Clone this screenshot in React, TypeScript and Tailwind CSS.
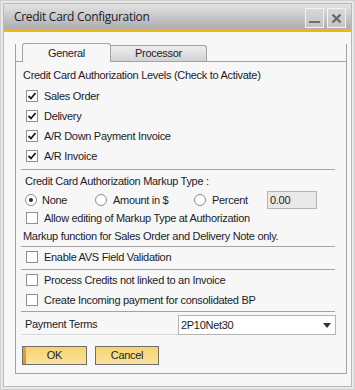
import React from "react";

const font = { fontFamily: '"Liberation Sans", Arial, sans-serif' };

function Check({ checked }: { checked?: boolean }) {
  return (
    <span className="w-[12px] h-[12px] border border-[#8e8f8f] bg-white flex items-center justify-center shrink-0">
      {checked && (
        <svg width="10" height="10" viewBox="0 0 10 10">
          <path d="M1.5 5 L4 7.5 L8.5 2" stroke="#1b1b1b" strokeWidth="1.8" fill="none" />
        </svg>
      )}
    </span>
  );
}

function Radio({ on }: { on?: boolean }) {
  return (
    <span className="w-[12px] h-[12px] rounded-full border border-[#8e8f8f] bg-white flex items-center justify-center shrink-0">
      {on && <span className="w-[4px] h-[4px] rounded-full bg-[#2a2a2a]" />}
    </span>
  );
}

function CheckRow({ label, checked, h = "h-[20px]" }: { label: string; checked?: boolean; h?: string }) {
  return (
    <div className={`${h} flex items-center pl-[10px] gap-[6px]`}>
      <Check checked={checked} />
      <span>{label}</span>
    </div>
  );
}

function Sep() {
  return <div className="ml-[5px] w-[314px] h-px bg-[#a3a3a3]" />;
}

export default function App() {
  return (
    <div className="w-[355px] h-[390px] bg-[#e9e9e9] border border-[#cfcfcf] p-[2px]" style={font}>
      <div className="h-full border border-[#b8b8b8] flex flex-col bg-[#f7f7f7]">
        <div className="h-[25px] bg-gradient-to-b from-[#e4e4e4] to-[#adadad] flex items-center pl-[10px] pr-[5px]">
          <span
            className="text-[12px] tracking-[-0.3px] text-[#1c1c2c] flex-1"
            style={{ fontFamily: '"Open Sans", "Noto Sans", sans-serif' }}
          >
            Credit Card Configuration
          </span>
          <div className="flex gap-[3px] mt-[3px]">
            <div className="w-[19px] h-[20px] border border-[#f2f2f2] bg-gradient-to-b from-[#d8d8d8] to-[#c4c4c4] flex items-end justify-center pb-[4px]">
              <span className="w-[11px] h-[2px] bg-[#6f6f6f]" />
            </div>
            <div className="w-[19px] h-[20px] border border-[#f2f2f2] bg-gradient-to-b from-[#d8d8d8] to-[#c4c4c4] flex items-center justify-center">
              <svg width="11" height="11" viewBox="0 0 11 11">
                <path d="M1.5 1.5 L9.5 9.5 M9.5 1.5 L1.5 9.5" stroke="#6a6a6a" strokeWidth="2.4" />
              </svg>
            </div>
          </div>
        </div>
        <div className="h-[3px] bg-[#f2b50e]" />
        <div className="flex-1 pt-[12px] pl-[11px] pr-[4px] text-[11px] tracking-[-0.3px] text-[#1c1c28]">
          <div className="flex items-end h-[18px] border-b border-[#a3a3a3] relative">
            <div className="w-[7px] h-full border-l border-[#a3a3a3]" />
            <div className="w-[89px] h-[19px] -mb-px bg-[#f7f7f7] border border-b-0 border-[#a3a3a3] rounded-t-[3px] flex items-center justify-center">
              General
            </div>
            <div className="w-[96px] h-[16px] bg-gradient-to-b from-[#eeeeee] to-[#d3d3d3] border border-l-0 border-b-0 border-[#a3a3a3] rounded-tr-[3px] flex items-center justify-center">
              Processor
            </div>
            <div className="flex-1 h-full border-r border-[#a3a3a3]" />
          </div>
          <div className="h-[312px] border-l border-r border-b border-[#a3a3a3] pt-[3px]">
            <div className="h-[20px] flex items-center pl-[7px]">Credit Card Authorization Levels (Check to Activate)</div>
            <div className="mt-px">
              <CheckRow label="Sales Order" checked />
              <CheckRow label="Delivery" checked />
              <CheckRow label="A/R Down Payment Invoice" checked />
              <CheckRow label="A/R Invoice" checked />
            </div>
            <div className="mt-[3px]">
              <Sep />
            </div>
            <div className="h-[20px] mt-px flex items-center pl-[9px]">Credit Card Authorization Markup Type :</div>
            <div className="h-[18px] flex items-center pl-[9px]">
              <div className="w-[70px] flex items-center gap-[5px]">
                <Radio on />
                <span>None</span>
              </div>
              <div className="w-[99px] flex items-center gap-[6px]">
                <Radio />
                <span>Amount in $</span>
              </div>
              <div className="w-[73px] flex items-center gap-[6px]">
                <Radio />
                <span>Percent</span>
              </div>
              <div className="w-[50px] h-[18px] bg-[#e9e9e9] border border-[#b4b4b4] flex items-center pl-[2px]">0.00</div>
            </div>
            <CheckRow label="Allow editing of Markup Type at Authorization" h="h-[18px]" />
            <div className="h-[19px] flex items-center pl-[7px]">Markup function for Sales Order and Delivery Note only.</div>
            <Sep />
            <CheckRow label="Enable AVS Field Validation" />
            <div className="mt-[2px]">
              <Sep />
            </div>
            <CheckRow label="Process Credits not linked to an Invoice" />
            <CheckRow label="Create Incoming payment for consolidated BP" />
            <div className="mt-px">
              <Sep />
            </div>
            <div className="mt-[3px] flex items-center h-[20px] pl-[5px]">
              <div className="w-[157px] h-full flex items-center pl-[4px] border-b border-[#dadada]">Payment Terms</div>
              <div className="w-[158px] h-[20px] bg-white border border-[#b4b4b4] flex items-center pl-[2px] pr-[4px]">
                <span className="flex-1">2P10Net30</span>
                <svg width="8" height="5" viewBox="0 0 8 5">
                  <path d="M0 0 L8 0 L4 5 Z" fill="#333" />
                </svg>
              </div>
            </div>
            <div className="mt-[11px] flex gap-[8px] pl-[6px]">
              <div className="w-[65px] h-[19px] border border-[#6e6e6e] bg-gradient-to-b from-[#f6d36c] to-[#fbe3a0] flex items-center relative">
                <span className="absolute left-0 top-0 bottom-0 w-[3px] bg-gradient-to-b from-[#f2a31c] to-[#ec8d0c]" />
                <span className="w-full text-center">OK</span>
              </div>
              <div className="w-[64px] h-[19px] border border-[#6e6e6e] bg-gradient-to-b from-[#f6d36c] to-[#fbe3a0] flex items-center justify-center">
                Cancel
              </div>
            </div>
          </div>
        </div>
      </div>
    </div>
  );
}
